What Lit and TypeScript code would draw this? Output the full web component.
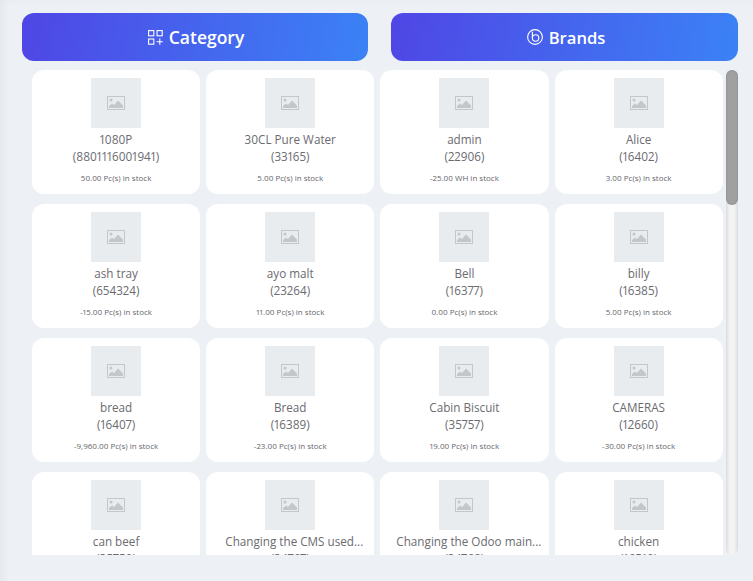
import { LitElement, html, css, svg } from "lit";
import { customElement } from "lit/decorators.js";
import { classMap } from "lit/directives/class-map.js";

type Item = { name: string; code: string; stock: string };

const ITEMS: Item[] = [
  { name: "1080P", code: "8801116001941", stock: "50.00 Pc(s)" },
  { name: "30CL Pure Water", code: "33165", stock: "5.00 Pc(s)" },
  { name: "admin", code: "22906", stock: "-25.00 WH" },
  { name: "Alice", code: "16402", stock: "3.00 Pc(s)" },
  { name: "ash tray", code: "654324", stock: "-15.00 Pc(s)" },
  { name: "ayo malt", code: "23264", stock: "11.00 Pc(s)" },
  { name: "Bell", code: "16377", stock: "0.00 Pc(s)" },
  { name: "billy", code: "16385", stock: "5.00 Pc(s)" },
  { name: "bread", code: "16407", stock: "-9,960.00 Pc(s)" },
  { name: "Bread", code: "16389", stock: "-23.00 Pc(s)" },
  { name: "Cabin Biscuit", code: "35757", stock: "19.00 Pc(s)" },
  { name: "CAMERAS", code: "12660", stock: "-30.00 Pc(s)" },
  { name: "can beef", code: "35750", stock: "4.00 Pc(s)" },
  { name: "Changing the CMS used...", code: "34767", stock: "1.00 Pc(s)" },
  { name: "Changing the Odoo main...", code: "34768", stock: "1.00 Pc(s)" },
  { name: "chicken", code: "16519", stock: "2.00 Pc(s)" },
];

const photo = svg`<svg class="ph" viewBox="0 0 18 14" width="18" height="14" aria-hidden="true">
  <rect x="0.5" y="0.5" width="17" height="13" fill="none" stroke="#c3c7ca" stroke-width="1"/>
  <circle cx="4" cy="4" r="1.5" fill="#c3c7ca"/>
  <path d="M2 12 L2 10 L5 7.5 L7 9 L11 4.5 L16 9.5 L16 12 Z" fill="#c3c7ca"/>
</svg>`;

@customElement("app-root")
export class AppRoot extends LitElement {
  static styles = css`
    :host {
      display: block;
      height: 581px;
      background: #edf0f5;
      box-shadow: inset 8px 4px 6px -4px rgba(0, 0, 0, 0.035);
      font-family: "Open Sans", "Noto Sans", sans-serif;
      font-variant-numeric: proportional-nums;
      box-sizing: border-box;
      padding: 13px 15px 0 22px;
      overflow: hidden;
    }
    .tabs {
      display: grid;
      grid-template-columns: 346px 347px;
      column-gap: 23px;
    }
    .tab {
      height: 48px;
      border-radius: 12px;
      background: linear-gradient(100deg, #4f46e5, #3b82f6);
      color: #fff;
      display: flex;
      align-items: center;
      justify-content: center;
      gap: 6px;
      padding-left: 2px;
      box-sizing: border-box;
      font-size: 17.5px;
      font-weight: 600;
    }
    .tab svg {
      display: block;
    }
    .tab.brands {
      font-size: 16.6px;
      padding-left: 3px;
    }
    .body {
      margin-top: 9px;
      margin-left: 10px;
      height: 485px;
      display: flex;
      gap: 3.3px;
    }
    .list {
      flex: 1;
      min-width: 0;
      overflow: hidden;
    }
    .bar {
      flex: none;
      width: 12px;
      border-radius: 6px;
      background: linear-gradient(90deg, #dcdcdc, #f3f3f3 30%, #f3f3f3 70%, #dcdcdc);
    }
    .thumb-bar {
      height: 135px;
      border-radius: 6px;
      background: #a0a0a0;
      box-shadow: inset 0 0 2px rgba(0, 0, 0, 0.2);
    }
    .grid {
      display: grid;
      grid-template-columns: repeat(4, 1fr);
      gap: 10px 6px;
    }
    .card {
      height: 124px;
      background: #fff;
      border-radius: 12px;
      padding: 8px 8px 0;
      box-sizing: border-box;
      display: flex;
      flex-direction: column;
      align-items: center;
      min-width: 0;
    }
    .thumb {
      width: 50px;
      height: 50px;
      flex: none;
      background: #e8ecef;
      display: flex;
      align-items: center;
      justify-content: center;
    }
    .name,
    .code {
      font-size: 11.7px;
      line-height: 17px;
      color: #6b6b70;
      text-align: center;
    }
    .name {
      margin-top: 3px;
      width: 100%;
      box-sizing: border-box;
      white-space: nowrap;
    }
    .name.long {
      padding-left: 8px;
    }
    .stock {
      margin-top: 7px;
      font-size: 8px;
      line-height: 11px;
      font-weight: 500;
      color: #66666c;
    }
  `;

  render() {
    return html`
      <div class="tabs">
        <div class="tab">
          <svg viewBox="0 0 15 15" width="15" height="15" fill="none" stroke="#fff" stroke-width="1.1">
            <rect x="0.6" y="0.6" width="5.2" height="5.2" />
            <rect x="9" y="0.6" width="5.2" height="5.2" />
            <rect x="0.6" y="9" width="5.2" height="5.2" />
            <path d="M11.8 8.6v6.2M8.6 11.7h6.2" />
          </svg>
          <span>Category</span>
        </div>
        <div class="tab brands">
          <svg viewBox="0 0 16 16" width="16" height="16" fill="none" stroke="#fff" stroke-width="1.1">
            <circle cx="8" cy="8" r="7.4" />
            <circle cx="8.6" cy="9" r="3.2" />
            <path d="M5.4 2.8v6.2" />
          </svg>
          <span>Brands</span>
        </div>
      </div>
      <div class="body">
        <div class="list">
          <div class="grid">
            ${ITEMS.map(
              (it) => html`<div class="card">
                <div class="thumb">${photo}</div>
                <div class=${classMap({ name: true, long: it.name.endsWith("...") })}>${it.name}</div>
                <div class="code">(${it.code})</div>
                <div class="stock">${it.stock} in stock</div>
              </div>`
            )}
          </div>
        </div>
        <div class="bar"><div class="thumb-bar"></div></div>
      </div>
    `;
  }
}
